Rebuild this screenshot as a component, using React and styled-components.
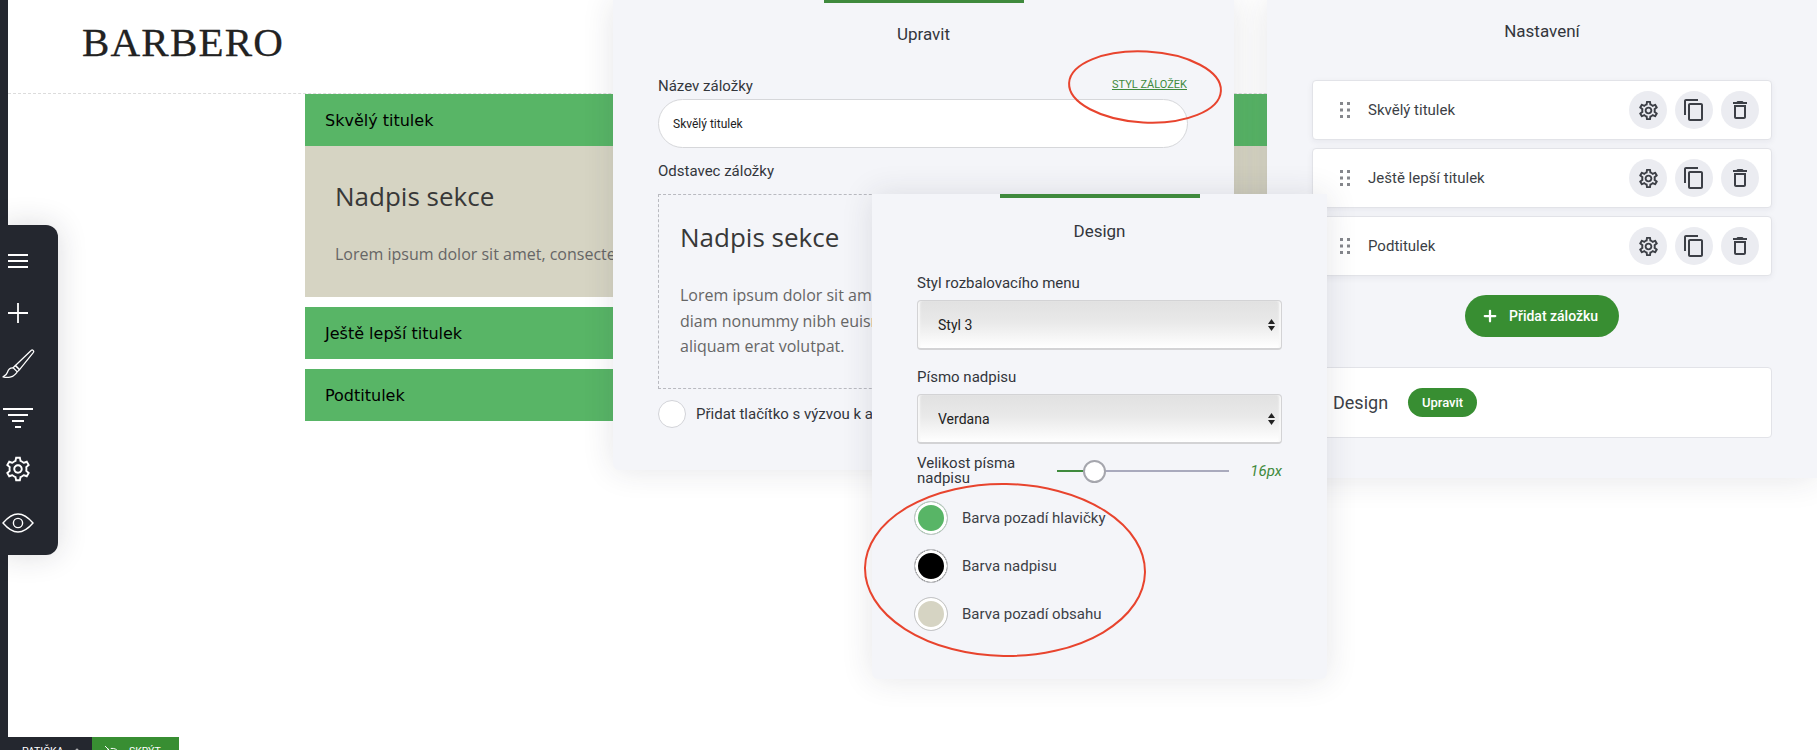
import React from "react"
import styled, { createGlobalStyle } from "styled-components"
import { Plus, EyeOff, ChevronUp } from "lucide-react"
import { LiaCogSolid } from "react-icons/lia"
import { MdOutlineContentCopy, MdOutlineDelete, MdOutlineSettings } from "react-icons/md"

const GlobalStyle = createGlobalStyle`
  html, body {
    margin: 0;
    padding: 0;
    background: #fff;
    overflow: hidden;
  }
  * { box-sizing: border-box; }
`

const Page = styled.div`
  position: relative;
  width: 1817px;
  height: 750px;
  overflow: hidden;
  padding-left: 8px;
  background: linear-gradient(to right, #24272f 8px, #fff 8px);
  font-family: Roboto, sans-serif;
  color: #33363c;
`

const Header = styled.header`
  height: 94px;
  border-bottom: 1px dashed #dcdcdc;
  padding: 18px 0 0 74px;
`

const Logo = styled.div`
  font-family: "Liberation Serif", serif;
  font-size: 41px;
  line-height: 48px;
  letter-spacing: 1.2px;
  color: #222;
  -webkit-text-stroke: 0.3px #222;
`

const Accordion = styled.div`
  width: 1300px;
  margin-left: 297px;
  display: flex;
  flex-direction: column;
  gap: 10px;
`

const AccordionItem = styled.div``

const AccordionHead = styled.div`
  height: 52px;
  line-height: 53px;
  padding-left: 20px;
  background: #58b566;
  font-family: "DejaVu Sans", sans-serif;
  font-size: 16px;
  color: #000;
`

const AccordionBody = styled.div`
  height: 151px;
  padding: 29px 30px 0;
  background: #d6d4c3;
`

const SectionTitle = styled.h2`
  margin: 0;
  font-family: "Open Sans", sans-serif;
  font-size: 26px;
  font-weight: 400;
  line-height: 42px;
  color: #383838;
`

const SectionText = styled.p`
  margin: 25px 0 0;
  font-family: "Open Sans", sans-serif;
  font-size: 16px;
  line-height: 25.5px;
  color: #666;
`

const Panel = styled.section`
  position: absolute;
  background: #f4f5f9;
  box-shadow: 0 0 32px rgba(40, 42, 60, 0.12);
  padding: 0 45px;
`

const EditPanel = styled(Panel)`
  left: 613px;
  top: 0;
  width: 621px;
  height: 470px;
  border-radius: 0 0 6px 6px;
  z-index: 2;
`

const SettingsPanel = styled(Panel)`
  left: 1267px;
  top: 0;
  width: 550px;
  height: 478px;
  z-index: 2;
`

const DesignPanel = styled(Panel)`
  left: 872px;
  top: 194px;
  width: 455px;
  height: 485px;
  border-radius: 0 0 6px 6px;
  z-index: 3;
`

const TopBar = styled.div`
  position: absolute;
  top: 0;
  left: 50%;
  width: 200px;
  height: ${(p) => p.$height}px;
  transform: translateX(-50%);
  background: #3f8a3d;
`

const PanelTitle = styled.h3`
  margin: 0;
  height: ${(p) => p.$height}px;
  line-height: ${(p) => p.$height}px;
  text-align: center;
  font-size: 17px;
  font-weight: 400;
  color: #33363c;
`

const LabelRow = styled.div`
  display: flex;
  justify-content: space-between;
  align-items: center;
  height: 20px;
  margin-top: 8px;
`

const Label = styled.label`
  display: block;
  height: 20px;
  line-height: 21px;
  font-size: 15px;
  color: #33363c;
  margin-top: ${(p) => p.$top || 0}px;
`

const StyleLink = styled.a`
  font-size: 11px;
  color: #3f8a3d;
  text-decoration: underline;
  position: relative;
  top: -2px;
  left: -2px;
`

const TextInput = styled.input`
  display: block;
  width: 530px;
  height: 49px;
  margin-top: 3px;
  padding: 0 14px;
  border: 1px solid #d6d7da;
  border-radius: 25px;
  background: #fff;
  outline: none;
  font-family: Roboto, sans-serif;
  font-size: 12px;
  color: #222;
`

const DashedBox = styled.div`
  width: 530px;
  height: 195px;
  margin-top: 13px;
  padding: 21px 21px;
  border: 1px dashed #b9bac0;
`

const CheckRow = styled.div`
  display: flex;
  align-items: center;
  gap: 10px;
  margin-top: 11px;
  font-size: 15px;
  white-space: nowrap;
`

const RoundCheck = styled.span`
  width: 28px;
  height: 28px;
  border: 1px solid #d2d3d8;
  border-radius: 50%;
  background: #fff;
`

const TabList = styled.div`
  display: flex;
  flex-direction: column;
  gap: 8px;
  margin-top: 18px;
`

const TabRow = styled.div`
  display: flex;
  align-items: center;
  height: 60px;
  padding: 0 12px 0 27px;
  background: #fff;
  border: 1px solid #e2e3e8;
  border-radius: 4px;
  box-shadow: 0 2px 6px rgba(40, 42, 60, 0.06);
`

const TabName = styled.span`
  flex: 1;
  margin-left: 18px;
  font-size: 15px;
  color: #3c3f46;
`

const RoundButton = styled.button`
  display: flex;
  align-items: center;
  justify-content: center;
  width: 38px;
  height: 38px;
  margin-left: 8px;
  padding: 0;
  border: 0;
  border-radius: 50%;
  background: #ebecf1;
  color: #3c3f46;
`

const AddButton = styled.button`
  display: flex;
  align-items: center;
  gap: 10px;
  width: 154px;
  height: 42px;
  margin: 19px auto 0;
  padding: 0 0 0 16px;
  border: 0;
  border-radius: 21px;
  background: #388e32;
  color: #fff;
  font-family: Roboto, sans-serif;
  font-size: 14px;
  font-weight: 500;
`

const DesignCard = styled.div`
  display: flex;
  align-items: center;
  gap: 20px;
  height: 71px;
  margin-top: 30px;
  padding-left: 20px;
  background: #fff;
  border: 1px solid #e2e3e8;
  border-radius: 4px;
  font-size: 18px;
  color: #3c3f46;
`

const EditPill = styled.button`
  width: 69px;
  height: 29px;
  padding: 0;
  border: 0;
  border-radius: 15px;
  background: #388e32;
  color: #fff;
  font-family: Roboto, sans-serif;
  font-size: 13px;
  font-weight: 500;
`

const SelectWrap = styled.div`
  position: relative;
  height: 50px;
  margin-top: 7px;
`

const Select = styled.select`
  appearance: none;
  display: block;
  width: 100%;
  height: 100%;
  padding: 0 20px;
  border: 1px solid #d3d3d5;
  border-bottom-width: 2px;
  border-radius: 4px;
  outline: none;
  background: linear-gradient(#e1e1e1 0%, #e9e9e9 45%, #ffffff 100%);
  box-shadow: inset 3px 0 2px -1px #f8f8f8, inset -3px 0 2px -1px #f8f8f8;
  font-family: Roboto, sans-serif;
  font-size: 14px;
  color: #222;
`

const SelectArrows = styled.svg`
  position: absolute;
  top: 19px;
  right: 7px;
  pointer-events: none;
`

const SliderRow = styled.div`
  display: flex;
  align-items: center;
  height: 30px;
  margin-top: 12px;
`

const SliderLabel = styled.div`
  width: 140px;
  font-size: 15px;
  line-height: 15px;
  color: #33363c;
`

const Range = styled.input`
  appearance: none;
  width: 172px;
  height: 23px;
  margin: 0;
  background: linear-gradient(
      to right,
      #3f8a3d 38px,
      #a9aabd 38px
    )
    center / 100% 2px no-repeat;

  &::-webkit-slider-thumb {
    appearance: none;
    width: 23px;
    height: 23px;
    border: 2px solid #a5a6ad;
    border-radius: 50%;
    background: #fff;
  }
`

const SliderValue = styled.span`
  margin-left: auto;
  font-size: 15px;
  font-style: italic;
  color: #3f8a3d;
`

const ColorList = styled.div`
  margin: 8px 0 0 -3px;
`

const ColorRow = styled.div`
  display: flex;
  align-items: center;
  gap: 14px;
  height: 48px;
  font-size: 15px;
  color: #3c3f46;
`

const Swatch = styled.span`
  width: 34px;
  height: 34px;
  border: 1px solid #c5c6ca;
  border-radius: 50%;
  background: ${(p) => p.$color};
  box-shadow: inset 0 0 0 3px #fff;
`

const Toolbar = styled.nav`
  position: absolute;
  left: 0;
  top: 225px;
  width: 58px;
  height: 330px;
  padding-top: 10px;
  border-radius: 0 12px 12px 0;
  background: #24272f;
  box-shadow: 0 0 30px rgba(30, 32, 50, 0.16);
  z-index: 4;
`

const Tool = styled.div`
  display: flex;
  align-items: center;
  justify-content: center;
  width: 36px;
  height: ${(p) => p.$h}px;
  color: #fff;
`

const FooterBar = styled.div`
  position: absolute;
  left: 8px;
  top: 737px;
  display: flex;
  height: 30px;
  font-size: 10.5px;
  color: #fff;
  z-index: 4;
`

const FooterTab = styled.div`
  display: flex;
  align-items: flex-start;
  gap: ${(p) => p.$gap}px;
  width: ${(p) => p.$width}px;
  padding: 8px 0 0 ${(p) => p.$pad}px;
  background: ${(p) => p.$bg};
`

const Scribble = styled.svg`
  position: absolute;
  left: ${(p) => p.$left}px;
  top: ${(p) => p.$top}px;
  pointer-events: none;
  z-index: 5;
`

const tabs = ["Skvělý titulek", "Ještě lepší titulek", "Podtitulek"]
const lorem =
  "Lorem ipsum dolor sit amet, consectetuer adipiscing elit, sed diam nonummy nibh euismod tincidunt ut laoreet dolore magna aliquam erat volutpat."

const DragDots = () => (
  <svg width="10" height="16" viewBox="0 0 10 16" fill="#85878c">
    <rect x="0" y="0" width="3" height="3" />
    <rect x="7" y="0" width="3" height="3" />
    <rect x="0" y="6.5" width="3" height="3" />
    <rect x="7" y="6.5" width="3" height="3" />
    <rect x="0" y="13" width="3" height="3" />
    <rect x="7" y="13" width="3" height="3" />
  </svg>
)

const Arrows = () => (
  <SelectArrows width="7" height="12" viewBox="0 0 7 12" fill="#222">
    <path d="M3.5 0 7 5H0z" />
    <path d="M0 7h7l-3.5 5z" />
  </SelectArrows>
)

const Lines = ({ rows }) => (
  <svg width="30" height="20" viewBox="0 0 30 20" stroke="#fff" strokeWidth="2" fill="none">
    {rows.map(([y, a, b]) => (
      <path key={y} d={`M${a} ${y}H${b}`} />
    ))}
  </svg>
)

const Brush = () => (
  <svg width="33" height="31" viewBox="0 0 32 30" fill="none" stroke="#fff" strokeWidth="1.2" strokeLinejoin="round">
    <path d="M28.5 1.2c1-.9 2.9.7 2 2L17 20l-4-4z" />
    <path d="M13 16l4 4-2.2 2.2-4-4z" />
    <path d="M10.8 18.2c-3.2-.3-4.8 1.8-5.5 4.3-.5 1.9-2 3.3-4.3 4.5 4.5 1.3 9.6.4 12-2.6 1-1.1 1.5-1.9 1.8-1.9" />
  </svg>
)

const Eye = () => (
  <svg width="32" height="20" viewBox="0 0 32 20" fill="none" stroke="#fff" strokeWidth="1.4">
    <path d="M1 10C7 3 12 1 16 1s9 2 15 9c-6 7-11 9-15 9S7 17 1 10z" />
    <circle cx="16" cy="10" r="4.6" />
  </svg>
)

export default function App() {
  return (
    <Page>
      <GlobalStyle />
      <Header>
        <Logo>BARBERO</Logo>
      </Header>

      <Accordion>
        <AccordionItem>
          <AccordionHead>{tabs[0]}</AccordionHead>
          <AccordionBody>
            <SectionTitle>Nadpis sekce</SectionTitle>
            <SectionText>{lorem}</SectionText>
          </AccordionBody>
        </AccordionItem>
        <AccordionItem>
          <AccordionHead>{tabs[1]}</AccordionHead>
        </AccordionItem>
        <AccordionItem>
          <AccordionHead>{tabs[2]}</AccordionHead>
        </AccordionItem>
      </Accordion>

      <Toolbar>
        <Tool $h={52}>
          <Lines rows={[[4, 5, 25], [10, 5, 25], [16, 5, 25]]} />
        </Tool>
        <Tool $h={51}>
          <svg width="22" height="22" viewBox="0 0 22 22" stroke="#fff" strokeWidth="1.8">
            <path d="M1 11h20M11 1v20" />
          </svg>
        </Tool>
        <Tool $h={52}>
          <Brush />
        </Tool>
        <Tool $h={56}>
          <Lines rows={[[1, 0, 30], [7, 5, 25], [13, 9, 21], [19, 12, 18]]} />
        </Tool>
        <Tool $h={45}>
          <LiaCogSolid size={30} />
        </Tool>
        <Tool $h={64}>
          <Eye />
        </Tool>
      </Toolbar>

      <EditPanel>
        <TopBar $height={3} />
        <PanelTitle $height={68}>Upravit</PanelTitle>
        <LabelRow>
          <Label>Název záložky</Label>
          <StyleLink>STYL ZÁLOŽEK</StyleLink>
        </LabelRow>
        <TextInput defaultValue="Skvělý titulek" />
        <Label $top={13}>Odstavec záložky</Label>
        <DashedBox>
          <SectionTitle>Nadpis sekce</SectionTitle>
          <SectionText>{lorem}</SectionText>
        </DashedBox>
        <CheckRow>
          <RoundCheck />
          Přidat tlačítko s výzvou k akci
        </CheckRow>
      </EditPanel>

      <SettingsPanel>
        <PanelTitle $height={62}>Nastavení</PanelTitle>
        <TabList>
          {tabs.map((tab) => (
            <TabRow key={tab}>
              <DragDots />
              <TabName>{tab}</TabName>
              <RoundButton>
                <MdOutlineSettings size={23} />
              </RoundButton>
              <RoundButton>
                <MdOutlineContentCopy size={24} />
              </RoundButton>
              <RoundButton>
                <MdOutlineDelete size={24} />
              </RoundButton>
            </TabRow>
          ))}
        </TabList>
        <AddButton>
          <Plus size={18} strokeWidth={3} />
          Přidat záložku
        </AddButton>
        <DesignCard>
          Design
          <EditPill>Upravit</EditPill>
        </DesignCard>
      </SettingsPanel>

      <DesignPanel>
        <TopBar $height={4} />
        <PanelTitle $height={74}>Design</PanelTitle>
        <Label $top={5}>Styl rozbalovacího menu</Label>
        <SelectWrap>
          <Select defaultValue="Styl 3">
            <option>Styl 3</option>
          </Select>
          <Arrows />
        </SelectWrap>
        <Label $top={17}>Písmo nadpisu</Label>
        <SelectWrap>
          <Select defaultValue="Verdana">
            <option>Verdana</option>
          </Select>
          <Arrows />
        </SelectWrap>
        <SliderRow>
          <SliderLabel>Velikost písma nadpisu</SliderLabel>
          <Range type="range" min="10" max="44" defaultValue="16" />
          <SliderValue>16px</SliderValue>
        </SliderRow>
        <ColorList>
          <ColorRow>
            <Swatch $color="#58b566" />
            Barva pozadí hlavičky
          </ColorRow>
          <ColorRow>
            <Swatch $color="#000" />
            Barva nadpisu
          </ColorRow>
          <ColorRow>
            <Swatch $color="#d6d4c3" />
            Barva pozadí obsahu
          </ColorRow>
        </ColorList>
      </DesignPanel>

      <Scribble $left={1060} $top={46} width="170" height="84" viewBox="0 0 170 84" fill="none" stroke="#e8442e" strokeWidth="2">
        <ellipse cx="85" cy="41" rx="76" ry="35.5" transform="rotate(3 85 41)" />
      </Scribble>
      <Scribble $left={855} $top={478} width="300" height="184" viewBox="0 0 300 184" fill="none" stroke="#e8442e" strokeWidth="2">
        <ellipse cx="150" cy="92" rx="140" ry="86" transform="rotate(1 150 92)" />
      </Scribble>

      <FooterBar>
        <FooterTab $width={84} $pad={14} $gap={8} $bg="#24272f">
          PATIČKA
          <ChevronUp size={10} />
        </FooterTab>
        <FooterTab $width={87} $pad={12} $gap={9} $bg="#388e32">
          <EyeOff size={16} strokeWidth={1.5} />
          SKRÝT
        </FooterTab>
      </FooterBar>
    </Page>
  )
}
